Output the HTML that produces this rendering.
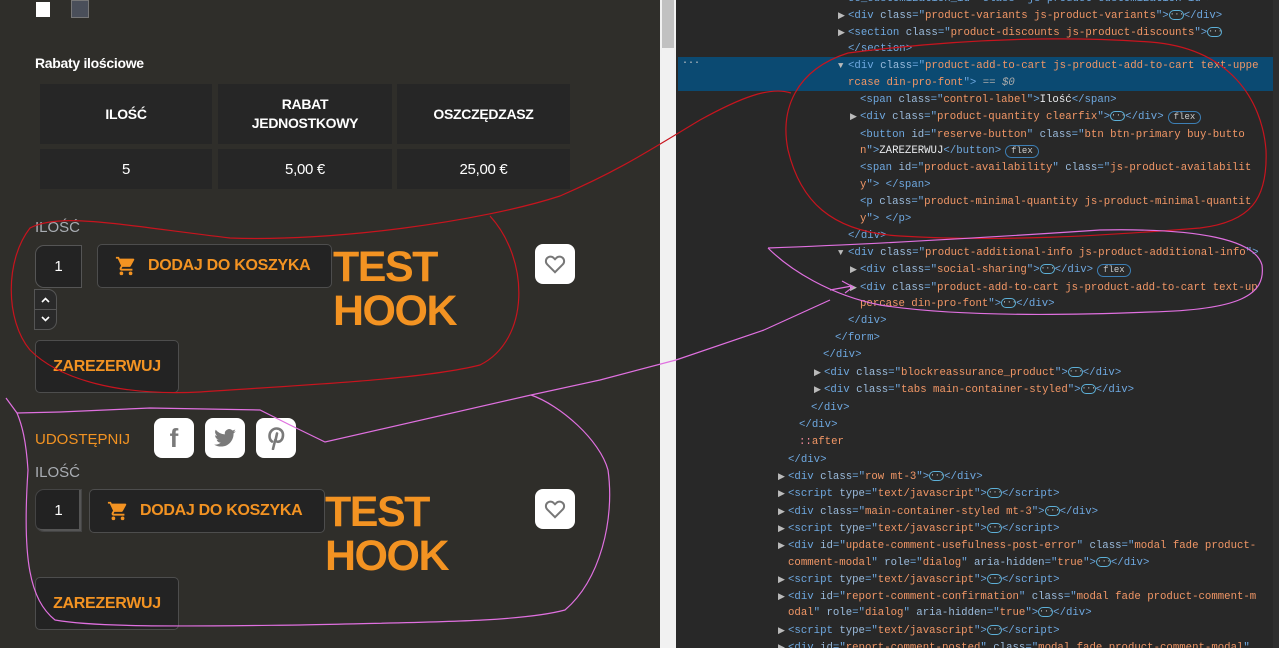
<!DOCTYPE html>
<html style="overflow:hidden"><head><meta charset="utf-8"><style>
*{margin:0;padding:0;box-sizing:border-box}
body{width:1279px;height:648px;overflow:hidden;position:relative;background:#282828;font-family:"Liberation Sans",sans-serif}
#left{position:absolute;left:0;top:0;width:660px;height:648px;background:#2f2e2a}
#sb{position:absolute;left:660px;top:0;width:16px;height:648px;background:#f1f1f1}
#sb i{position:absolute;left:2px;top:0;width:12px;height:48px;background:#c1c1c1}
.a{position:absolute}
.cell{position:absolute;background:#262626;color:#fff;font-weight:bold;font-size:14px;text-align:center;display:flex;align-items:center;justify-content:center;line-height:19px;letter-spacing:-.3px}
.cell.nn{font-weight:normal;font-size:15px}
.lbl{color:#a9adb3;font-size:15px}
.qty{position:absolute;width:47px;height:43px;background:#232323;border:1px solid #555;border-radius:9px 0 0 9px;color:#fff;font-size:15px;display:flex;align-items:center;justify-content:center}
.btn{position:absolute;background:#232323;border:1px solid #4d4d4d;border-radius:5px;color:#f39322;font-weight:bold;font-size:16px;display:flex;align-items:center;letter-spacing:-.3px}
.hook{position:absolute;color:#f39322;font-weight:bold;font-size:43px;line-height:44px;letter-spacing:-1.5px}
.wb{position:absolute;background:#fff;border-radius:8px;display:flex;align-items:center;justify-content:center}
#dt{position:absolute;left:676px;top:0;width:603px;height:648px;background:#282828;font-family:"Liberation Mono",monospace;font-size:10.7px;color:#e8eaed}
.l{position:absolute;white-space:pre;height:17px;line-height:17px}
.t{color:#6ea8e0}.n{color:#9bbbdc}.v{color:#f29766}.w{color:#e8eaed}
.tr{position:absolute;color:#bbb;font-size:9px}
.el{display:inline-block;width:15px;height:10px;border:1px solid #5db0d7;border-radius:5px;vertical-align:middle;font-size:8px;line-height:7px;text-align:center;color:#ccc;overflow:hidden}
.fx{display:inline-block;border:1px solid #3d7fb5;border-radius:7px;padding:0 5px;font-size:9px;line-height:11px;color:#ccc;margin-left:4px}
</style></head><body>
<div id="left">
<div class="a" style="left:36px;top:2px;width:14px;height:15px;background:#fff"></div>
<div class="a" style="left:71px;top:0;width:18px;height:18px;background:#4a4f5a;border:1px solid #777"></div>
<div class="a" style="left:35px;top:55px;color:#fff;font-weight:bold;font-size:14px;letter-spacing:-.3px">Rabaty ilościowe</div>
<div class="cell" style="left:40px;top:84px;width:172px;height:60px">ILOŚĆ</div>
<div class="cell" style="left:218px;top:84px;width:174px;height:60px">RABAT<br>JEDNOSTKOWY</div>
<div class="cell" style="left:397px;top:84px;width:173px;height:60px">OSZCZĘDZASZ</div>
<div class="cell nn" style="left:40px;top:149px;width:172px;height:40px">5</div>
<div class="cell nn" style="left:218px;top:149px;width:174px;height:40px">5,00 €</div>
<div class="cell nn" style="left:397px;top:149px;width:173px;height:40px">25,00 €</div>

<div class="a lbl" style="left:35px;top:219px">ILOŚĆ</div>
<div class="qty" style="left:35px;top:245px">1</div>
<div class="a" style="left:34px;top:289px;width:23px;height:41px;border:1px solid #555;border-radius:0 9px 9px 0;background:#2a2a2a">
<svg width="21" height="39" viewBox="0 0 21 39"><path d="M7 12l3.5-3.5L14 12M7 27l3.5 3.5L14 27" stroke="#fff" stroke-width="1.6" fill="none"/><path d="M0 19.5h21" stroke="#555"/></svg></div>
<div class="btn" style="left:97px;top:244px;width:235px;height:44px"><svg style="margin:0 11px 0 17px" width="22" height="22" viewBox="0 0 24 24"><path fill="#f39322" d="M7 18a2 2 0 1 0 0 4 2 2 0 0 0 0-4zM1 2v2h2l3.6 7.6-1.4 2.4c-.1.3-.2.6-.2 1 0 1.1.9 2 2 2h12v-2H7.4c-.1 0-.2-.1-.2-.2v-.1l.9-1.7h7.5c.8 0 1.4-.4 1.7-1l3.6-6.5c.1-.2.1-.3.1-.5 0-.6-.4-1-1-1H5.2L4.3 2H1zm16 16a2 2 0 1 0 0 4 2 2 0 0 0 0-4z"/></svg>DODAJ DO KOSZYKA</div>
<div class="hook" style="left:333px;top:245px">TEST<br>HOOK</div>
<div class="wb" style="left:535px;top:244px;width:40px;height:40px"><svg width="22" height="20" viewBox="0 0 24 22"><path fill="none" stroke="#777" stroke-width="2.2" d="M12 20 3.5 11.5a5 5 0 0 1 7-7.2L12 5.8l1.5-1.5a5 5 0 0 1 7 7.2z"/></svg></div>
<div class="btn" style="left:35px;top:340px;width:144px;height:53px;justify-content:center">ZAREZERWUJ</div>

<div class="a" style="left:35px;top:431px;color:#f39322;font-size:15px">UDOSTĘPNIJ</div>
<div class="wb" style="left:154px;top:418px;width:40px;height:40px;color:#7a7a7a;font-weight:bold;font-size:26px">f</div>
<div class="wb" style="left:205px;top:418px;width:40px;height:40px"><svg width="22" height="18" viewBox="0 0 24 20"><path fill="#7a7a7a" d="M24 2.4c-.9.4-1.8.7-2.8.8 1-.6 1.8-1.6 2.2-2.7-1 .6-2 1-3.1 1.2A4.9 4.9 0 0 0 11.9 6 14 14 0 0 1 1.7.9a4.9 4.9 0 0 0 1.5 6.6c-.8 0-1.6-.2-2.2-.6 0 2.4 1.7 4.4 3.9 4.8-.7.2-1.5.2-2.2.1.6 2 2.4 3.4 4.6 3.4A9.9 9.9 0 0 1 0 17.3 14 14 0 0 0 7.5 19.5c9.1 0 14-7.5 14-14v-.6c1-.7 1.8-1.6 2.5-2.5z"/></svg></div>
<div class="wb" style="left:256px;top:418px;width:40px;height:40px"><svg width="18" height="24" viewBox="0 0 18 24"><path fill="none" stroke="#7a7a7a" stroke-width="2.6" stroke-linecap="round" d="M5 15.5C3.5 14.5 2.5 12.5 2.5 10c0-4.5 3.5-7.5 7-7.5s6.5 2.5 6.5 6.5c0 4-2.2 6.8-5 6.8-1.5 0-2.5-1-2.3-2.3L10 7.5M8.2 14 6 23"/></svg></div>
<div class="a lbl" style="left:35px;top:464px">ILOŚĆ</div>
<div class="qty" style="left:35px;top:489px;border-color:#444;background:#222;box-shadow:inset -2px -2px 0 #555">1</div>
<div class="btn" style="left:89px;top:489px;width:236px;height:44px"><svg style="margin:0 11px 0 17px" width="22" height="22" viewBox="0 0 24 24"><path fill="#f39322" d="M7 18a2 2 0 1 0 0 4 2 2 0 0 0 0-4zM1 2v2h2l3.6 7.6-1.4 2.4c-.1.3-.2.6-.2 1 0 1.1.9 2 2 2h12v-2H7.4c-.1 0-.2-.1-.2-.2v-.1l.9-1.7h7.5c.8 0 1.4-.4 1.7-1l3.6-6.5c.1-.2.1-.3.1-.5 0-.6-.4-1-1-1H5.2L4.3 2H1zm16 16a2 2 0 1 0 0 4 2 2 0 0 0 0-4z"/></svg>DODAJ DO KOSZYKA</div>
<div class="hook" style="left:325px;top:490px">TEST<br>HOOK</div>
<div class="wb" style="left:535px;top:489px;width:40px;height:40px"><svg width="22" height="20" viewBox="0 0 24 22"><path fill="none" stroke="#777" stroke-width="2.2" d="M12 20 3.5 11.5a5 5 0 0 1 7-7.2L12 5.8l1.5-1.5a5 5 0 0 1 7 7.2z"/></svg></div>
<div class="btn" style="left:35px;top:577px;width:144px;height:53px;justify-content:center">ZAREZERWUJ</div>
</div>
<div id="sb"><i></i></div>

<div id="dt">
<div class="a" style="left:2px;top:57px;width:601px;height:34px;background:#0b4a72"></div>
<div class="a" style="left:597px;top:0;width:6px;height:648px;background:#2e2e2e"></div>
<div class="a" style="left:6px;top:58px;color:#ccc;font-size:10px">···</div>
<div class="l" style="left:172px;top:-9px"><span class="t">cc_customization_id" class="js-product-customization-id"&gt;</span></div>
<span class="tr" style="left:162px;top:11px">▶</span><div class="l" style="left:172px;top:8px"><span class="t">&lt;div </span><span class="n">class</span><span class="t">="</span><span class="v">product-variants js-product-variants</span><span class="t">"&gt;</span><span class="el">···</span><span class="t">&lt;/div&gt;</span></div>
<span class="tr" style="left:162px;top:28px">▶</span><div class="l" style="left:172px;top:25px"><span class="t">&lt;section </span><span class="n">class</span><span class="t">="</span><span class="v">product-discounts js-product-discounts</span><span class="t">"&gt;</span><span class="el">···</span></div>
<div class="l" style="left:172px;top:41px"><span class="t">&lt;/section&gt;</span></div>
<span class="tr" style="left:162px;top:61px">▼</span><div class="l" style="left:172px;top:58px"><span class="t">&lt;div </span><span class="n">class</span><span class="t">="</span><span class="v">product-add-to-cart js-product-add-to-cart text-uppe</span></div>
<div class="l" style="left:172px;top:75px"><span class="v">rcase din-pro-font</span><span class="t">"&gt;</span><span style="color:#aaa"> == <i>$0</i></span></div>
<div class="l" style="left:184px;top:92px"><span class="t">&lt;span </span><span class="n">class</span><span class="t">="</span><span class="v">control-label</span><span class="t">"&gt;</span><span class="w">Ilość</span><span class="t">&lt;/span&gt;</span></div>
<span class="tr" style="left:174px;top:112px">▶</span><div class="l" style="left:184px;top:109px"><span class="t">&lt;div </span><span class="n">class</span><span class="t">="</span><span class="v">product-quantity clearfix</span><span class="t">"&gt;</span><span class="el">···</span><span class="t">&lt;/div&gt;</span><span class="fx">flex</span></div>
<div class="l" style="left:184px;top:127px"><span class="t">&lt;button </span><span class="n">id</span><span class="t">="</span><span class="v">reserve-button</span><span class="t">" </span><span class="n">class</span><span class="t">="</span><span class="v">btn btn-primary buy-butto</span></div>
<div class="l" style="left:184px;top:143px"><span class="v">n</span><span class="t">"&gt;</span><span class="w">ZAREZERWUJ</span><span class="t">&lt;/button&gt;</span><span class="fx">flex</span></div>
<div class="l" style="left:184px;top:160px"><span class="t">&lt;span </span><span class="n">id</span><span class="t">="</span><span class="v">product-availability</span><span class="t">" </span><span class="n">class</span><span class="t">="</span><span class="v">js-product-availabilit</span></div>
<div class="l" style="left:184px;top:177px"><span class="v">y</span><span class="t">"&gt; &lt;/span&gt;</span></div>
<div class="l" style="left:184px;top:194px"><span class="t">&lt;p </span><span class="n">class</span><span class="t">="</span><span class="v">product-minimal-quantity js-product-minimal-quantit</span></div>
<div class="l" style="left:184px;top:211px"><span class="v">y</span><span class="t">"&gt; &lt;/p&gt;</span></div>
<div class="l" style="left:172px;top:228px"><span class="t">&lt;/div&gt;</span></div>
<span class="tr" style="left:162px;top:248px">▼</span><div class="l" style="left:172px;top:245px"><span class="t">&lt;div </span><span class="n">class</span><span class="t">="</span><span class="v">product-additional-info js-product-additional-info</span><span class="t">"&gt;</span></div>
<span class="tr" style="left:174px;top:265px">▶</span><div class="l" style="left:184px;top:262px"><span class="t">&lt;div </span><span class="n">class</span><span class="t">="</span><span class="v">social-sharing</span><span class="t">"&gt;</span><span class="el">···</span><span class="t">&lt;/div&gt;</span><span class="fx">flex</span></div>
<span class="tr" style="left:174px;top:283px">▶</span><div class="l" style="left:184px;top:280px"><span class="t">&lt;div </span><span class="n">class</span><span class="t">="</span><span class="v">product-add-to-cart js-product-add-to-cart text-up</span></div>
<div class="l" style="left:184px;top:296px"><span class="v">percase din-pro-font</span><span class="t">"&gt;</span><span class="el">···</span><span class="t">&lt;/div&gt;</span></div>
<div class="l" style="left:172px;top:313px"><span class="t">&lt;/div&gt;</span></div>
<div class="l" style="left:159px;top:330px"><span class="t">&lt;/form&gt;</span></div>
<div class="l" style="left:147px;top:347px"><span class="t">&lt;/div&gt;</span></div>
<span class="tr" style="left:138px;top:368px">▶</span><div class="l" style="left:148px;top:365px"><span class="t">&lt;div </span><span class="n">class</span><span class="t">="</span><span class="v">blockreassurance_product</span><span class="t">"&gt;</span><span class="el">···</span><span class="t">&lt;/div&gt;</span></div>
<span class="tr" style="left:138px;top:385px">▶</span><div class="l" style="left:148px;top:382px"><span class="t">&lt;div </span><span class="n">class</span><span class="t">="</span><span class="v">tabs main-container-styled</span><span class="t">"&gt;</span><span class="el">···</span><span class="t">&lt;/div&gt;</span></div>
<div class="l" style="left:135px;top:400px"><span class="t">&lt;/div&gt;</span></div>
<div class="l" style="left:123px;top:417px"><span class="t">&lt;/div&gt;</span></div>
<div class="l" style="left:123px;top:434px"><span style="color:#f28b9b">::</span><span class="v">after</span></div>
<div class="l" style="left:112px;top:452px"><span class="t">&lt;/div&gt;</span></div>
<span class="tr" style="left:102px;top:472px">▶</span><div class="l" style="left:112px;top:469px"><span class="t">&lt;div </span><span class="n">class</span><span class="t">="</span><span class="v">row mt-3</span><span class="t">"&gt;</span><span class="el">···</span><span class="t">&lt;/div&gt;</span></div>
<span class="tr" style="left:102px;top:489px">▶</span><div class="l" style="left:112px;top:486px"><span class="t">&lt;script </span><span class="n">type</span><span class="t">="</span><span class="v">text/javascript</span><span class="t">"&gt;</span><span class="el">···</span><span class="t">&lt;/script&gt;</span></div>
<span class="tr" style="left:102px;top:507px">▶</span><div class="l" style="left:112px;top:504px"><span class="t">&lt;div </span><span class="n">class</span><span class="t">="</span><span class="v">main-container-styled mt-3</span><span class="t">"&gt;</span><span class="el">···</span><span class="t">&lt;/div&gt;</span></div>
<span class="tr" style="left:102px;top:524px">▶</span><div class="l" style="left:112px;top:521px"><span class="t">&lt;script </span><span class="n">type</span><span class="t">="</span><span class="v">text/javascript</span><span class="t">"&gt;</span><span class="el">···</span><span class="t">&lt;/script&gt;</span></div>
<span class="tr" style="left:102px;top:541px">▶</span><div class="l" style="left:112px;top:538px"><span class="t">&lt;div </span><span class="n">id</span><span class="t">="</span><span class="v">update-comment-usefulness-post-error</span><span class="t">" </span><span class="n">class</span><span class="t">="</span><span class="v">modal fade product-</span></div>
<div class="l" style="left:112px;top:555px"><span class="v">comment-modal</span><span class="t">" </span><span class="n">role</span><span class="t">="</span><span class="v">dialog</span><span class="t">" </span><span class="n">aria-hidden</span><span class="t">="</span><span class="v">true</span><span class="t">"&gt;</span><span class="el">···</span><span class="t">&lt;/div&gt;</span></div>
<span class="tr" style="left:102px;top:575px">▶</span><div class="l" style="left:112px;top:572px"><span class="t">&lt;script </span><span class="n">type</span><span class="t">="</span><span class="v">text/javascript</span><span class="t">"&gt;</span><span class="el">···</span><span class="t">&lt;/script&gt;</span></div>
<span class="tr" style="left:102px;top:592px">▶</span><div class="l" style="left:112px;top:589px"><span class="t">&lt;div </span><span class="n">id</span><span class="t">="</span><span class="v">report-comment-confirmation</span><span class="t">" </span><span class="n">class</span><span class="t">="</span><span class="v">modal fade product-comment-m</span></div>
<div class="l" style="left:112px;top:605px"><span class="v">odal</span><span class="t">" </span><span class="n">role</span><span class="t">="</span><span class="v">dialog</span><span class="t">" </span><span class="n">aria-hidden</span><span class="t">="</span><span class="v">true</span><span class="t">"&gt;</span><span class="el">···</span><span class="t">&lt;/div&gt;</span></div>
<span class="tr" style="left:102px;top:626px">▶</span><div class="l" style="left:112px;top:623px"><span class="t">&lt;script </span><span class="n">type</span><span class="t">="</span><span class="v">text/javascript</span><span class="t">"&gt;</span><span class="el">···</span><span class="t">&lt;/script&gt;</span></div>
<span class="tr" style="left:102px;top:643px">▶</span><div class="l" style="left:112px;top:640px;height:8px;overflow:hidden"><span class="t">&lt;div </span><span class="n">id</span><span class="t">="</span><span class="v">report-comment-posted</span><span class="t">" </span><span class="n">class</span><span class="t">="</span><span class="v">modal fade product-comment-modal</span><span class="t">"</span></div>
</div>

<svg class="a" style="left:0;top:0" width="1279" height="648" viewBox="0 0 1279 648" fill="none">
<g stroke="#c8141e" stroke-width="1.2">
<path d="M490 216C530 260 530 340 480 365C420 380 300 385 200 392C120 396 60 380 30 350C5 320 5 260 30 228C60 212 120 225 230 238C330 242 480 222 560 196C620 170 650 150 700 120C740 98 770 86 791 93"/>
<path d="M848 53C950 40 1050 35 1150 42C1230 48 1262 100 1266 150C1268 200 1250 222 1200 228C1100 236 1000 242 900 236C830 232 800 200 788 150C780 110 795 70 848 53"/>
</g>
<g stroke="#e070e0" stroke-width="1.2">
<path d="M764 330L676 360L600 380L531 395L325 442L290 425L260 410L150 408L60 412L17 413L6 398"/>
<path d="M531 395C560 405 600 440 608 470C615 520 600 580 565 610C520 622 430 622 300 625C200 626 100 628 55 620C30 600 22 560 28 470C26 440 22 425 17 413"/>
<path d="M764 330L830 300"/>
<path d="M768 248C850 245 950 240 1100 230C1200 228 1255 240 1262 265C1266 295 1240 310 1150 312C1050 316 950 316 880 305C830 295 790 270 768 248"/>
<path d="M830 290L852 286M842 281L853 287L845 293"/>
</g>
</svg>
</body></html>
